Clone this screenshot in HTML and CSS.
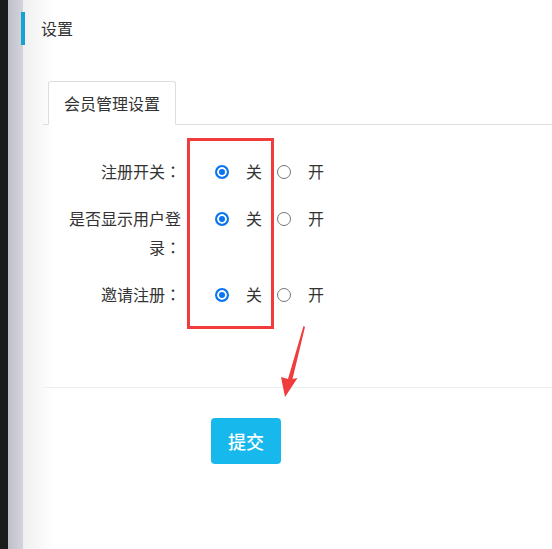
FILE: index.html
```html
<!doctype html>
<html>
<head>
	<meta charset="UTF-8">
	<title>设置</title>
	<link rel="stylesheet" href="styles.css">
</head>
<body>
	<div class="page">
		<div class="title">设置</div>
		<div class="panel">
			<ul class="tabs">
				<li class="tab active">会员管理设置</li>
			</ul>
			<form class="form">
				<div class="row">
					<label class="row-label">注册开关<span class="colon">：</span></label>
					<div class="row-field">
						<input type="radio" name="reg" checked><span class="opt">关</span>
						<input type="radio" name="reg"><span class="opt">开</span>
					</div>
				</div>
				<div class="row">
					<label class="row-label">是否显示用户登录<span class="colon">：</span></label>
					<div class="row-field">
						<input type="radio" name="show" checked><span class="opt">关</span>
						<input type="radio" name="show"><span class="opt">开</span>
					</div>
				</div>
				<div class="row">
					<label class="row-label">邀请注册<span class="colon">：</span></label>
					<div class="row-field">
						<input type="radio" name="invite" checked><span class="opt">关</span>
						<input type="radio" name="invite"><span class="opt">开</span>
					</div>
				</div>
				<div class="actions">
					<button type="button" class="btn">提交</button>
				</div>
			</form>
		</div>
	</div>
	<!-- 标注 -->
	<div class="mark-box"></div>
	<svg class="mark-arrow" viewBox="0 0 30 80" width="30" height="80">
		<polygon points="25.5,4 27,5 14.5,57 19.5,56 7,75 3,55 10,57" fill="#f03c3c"/>
	</svg>
</body>
</html>
```

FILE: styles.css
```css
*{
	box-sizing:border-box;
}
body{
	margin:0;
	min-height:549px;
	font-family:"Noto Sans CJK SC", "Noto Sans", sans-serif;
	font-size:16px;
	color:#333333;
	background:linear-gradient(to right, #1c1c1c 0px, #1c1c1c 8px, #c0c0c8 8px, #d4d4dc 23px, #f0f0f0 23px, #ffffff 55px);
}
.page{
	padding:12px 0 0 21px;
}
.title{
	height:33px;
	line-height:33px;
	border-left:4px solid #17a2d6;
	padding-left:16px;
}
.panel{
	margin:36px 0 0 22px;
}
.tabs{
	list-style:none;
	margin:0;
	padding:0 0 0 5px;
	display:flex;
	border-bottom:1px solid #dddddd;
}
.tab{
	padding:0 15px;
	line-height:42px;
	border:1px solid #dddddd;
	border-bottom:1px solid #ffffff;
	border-radius:3px 3px 0 0;
	margin-bottom:-1px;
	background:#ffffff;
}
.form{
	padding-top:32px;
}
.row{
	display:flex;
	margin-bottom:18px;
	line-height:29px;
}
.row-label{
	flex:none;
	width:138px;
	padding-left:15px;
	text-align:right;
}
.colon{
	font-family:"Noto Sans CJK TC", sans-serif;
}
.row-field{
	display:flex;
	align-items:center;
	height:29px;
	padding-left:34px;
}
.row-field input{
	appearance:none;
	-webkit-appearance:none;
	margin:0;
	width:14px;
	height:14px;
	border:1px solid #767676;
	border-radius:50%;
	background:#ffffff;
}
.row-field input:checked{
	border:2px solid #0b75f0;
	box-shadow:inset 0 0 0 2px #ffffff;
	background:#0b75f0;
}
.opt{
	margin:0 15px 0 17px;
}
.actions{
	margin-top:78px;
	border-top:1px solid #eeeeee;
	padding:30px 0 0 168px;
}
.btn{
	width:70px;
	height:46px;
	border:none;
	border-radius:4px;
	background:#17b9ec;
	color:#ffffff;
	font-family:"Noto Sans CJK SC", sans-serif;
	font-size:18px;
	font-weight:500;
}
.mark-box{
	position:absolute;
	left:187px;
	top:138px;
	width:87px;
	height:191px;
	border:3px solid #f03c3c;
}
.mark-arrow{
	position:absolute;
	left:278px;
	top:322px;
}
```
